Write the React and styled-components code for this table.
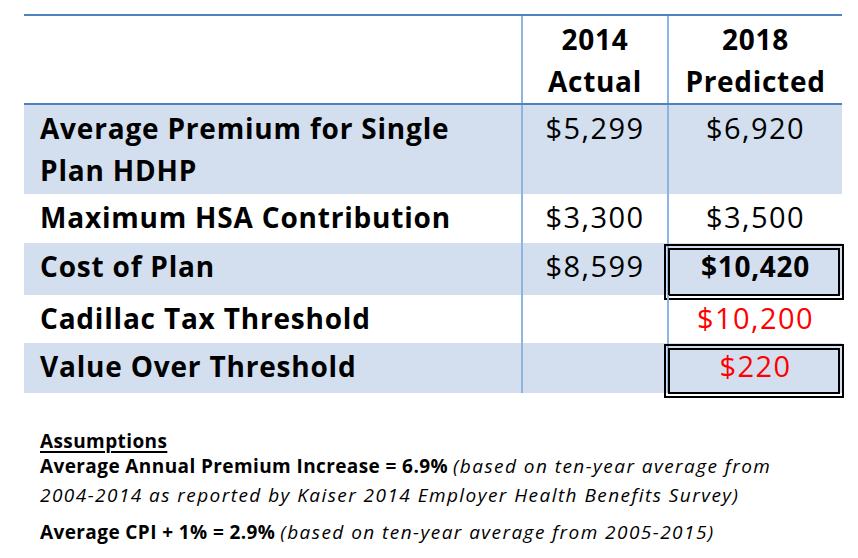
import styled, { createGlobalStyle } from 'styled-components';

const GlobalStyle = createGlobalStyle`
    html, body {
        margin: 0;
        padding: 0;
        background: #ffffff;
    }
    body {
        font-family: "Open Sans", Lato, "Liberation Sans", sans-serif;
        color: #000;
    }
`;

const Page = styled.div`
    width: 858px;
    height: 558px;
    padding: 14px 0 0 24px;
    box-sizing: border-box;
    overflow: hidden;
`;

const Table = styled.div`
    width: 818px;
    border-top: 2px solid #4f81bd;
`;

const Row = styled.div`
    display: grid;
    grid-template-columns: 497px 146px 175px;
    height: ${p => p.$h}px;
    background: ${p => (p.$shaded ? '#d3dfee' : '#ffffff')};
    border-bottom: ${p => (p.$head ? '2px solid #4f81bd' : 'none')};
    box-sizing: border-box;
`;

const Label = styled.div`
    padding: 2px 0 0 16px;
    font-size: 28px;
    font-weight: 700;
    line-height: 42px;
    letter-spacing: 0.8px;
    white-space: nowrap;
`;

const Cell = styled.div`
    position: relative;
    border-left: 2px solid #8eb4e0;
    text-align: center;
    padding-top: 2px;
    font-size: ${p => (p.$bold ? 28 : 29)}px;
    line-height: 42px;
    white-space: nowrap;
    font-weight: ${p => (p.$bold ? 700 : 400)};
    letter-spacing: ${p => (p.$bold ? '0.7px' : '1.4px')};
    color: ${p => (p.$red ? '#ff0000' : '#000')};

    ${p =>
        p.$boxed &&
        `
        &::after {
            content: '';
            position: absolute;
            top: 1px;
            left: -5px;
            right: -2px;
            bottom: -5px;
            border: 6px double #000;
            pointer-events: none;
        }
    `}
`;

const Notes = styled.div`
    margin-top: 37px;
    padding-left: 16px;
    font-size: 19px;
    line-height: 29px;
`;

const Heading = styled.div`
    font-weight: 700;
    text-decoration: underline;
    text-decoration-thickness: 2px;
    text-underline-offset: 3px;
    line-height: 22px;
    letter-spacing: 0.4px;
`;

const Item = styled.p`
    margin: 0 0 8px;
    white-space: nowrap;
    b {
        font-weight: 700;
        letter-spacing: 0.4px;
    }
    i {
        font-style: italic;
        letter-spacing: 1.45px;
    }
`;

const rows = [
    { label: ['Average Premium for Single', 'Plan HDHP'], a: '$5,299', b: '$6,920', h: 89, shaded: true },
    { label: ['Maximum HSA Contribution'], a: '$3,300', b: '$3,500', h: 49 },
    { label: ['Cost of Plan'], a: '$8,599', b: '$10,420', h: 52, shaded: true, bold: true, boxed: true },
    { label: ['Cadillac Tax Threshold'], a: '', b: '$10,200', h: 48, red: true },
    { label: ['Value Over Threshold'], a: '', b: '$220', h: 50, shaded: true, red: true, boxed: true },
];

const App = () => {
    return (
        <>
            <GlobalStyle />
            <Page>
                <Table>
                    <Row $h={89} $head>
                        <Label />
                        <Cell $bold>2014<br />Actual</Cell>
                        <Cell $bold>2018<br />Predicted</Cell>
                    </Row>
                    {rows.map((r, i) => (
                        <Row key={i} $h={r.h} $shaded={r.shaded}>
                            <Label>
                                {r.label.map((l, j) => (
                                    <div key={j}>{l}</div>
                                ))}
                            </Label>
                            <Cell>{r.a}</Cell>
                            <Cell $bold={r.bold} $red={r.red} $boxed={r.boxed}>{r.b}</Cell>
                        </Row>
                    ))}
                </Table>

                <Notes>
                    <Heading>Assumptions</Heading>
                    <Item>
                        <b>Average Annual Premium Increase = 6.9%</b>{' '}
                        <i>(based on ten-year average from</i>
                        <br />
                        <i>2004-2014 as reported by Kaiser 2014 Employer Health Benefits Survey)</i>
                    </Item>
                    <Item>
                        <b>Average CPI + 1% = 2.9%</b>{' '}
                        <i>(based on ten-year average from 2005-2015)</i>
                    </Item>
                </Notes>
            </Page>
        </>
    );
};

export default App;
